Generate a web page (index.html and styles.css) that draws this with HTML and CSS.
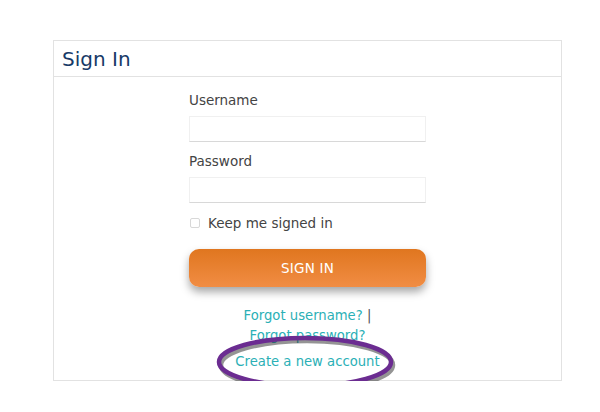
FILE: index.html
```html
<!DOCTYPE html>
<html>
<head>
<meta charset="utf-8">
<link rel="stylesheet" href="styles.css">
</head>
<body>
<div class="card">
  <div class="card-header">Sign In</div>
  <div class="card-body">
    <form class="form">
      <label class="label">Username</label>
      <div class="input"></div>
      <label class="label">Password</label>
      <div class="input"></div>
      <div class="check-row"><span class="checkbox"></span><span>Keep me signed in</span></div>
      <div class="button">SIGN IN</div>
      <div class="links">
        <div><a>Forgot username?</a> <span class="sep">|</span></div>
        <div><a>Forgot password?</a></div>
        <div class="create"><a>Create a new account</a>
          <svg class="ring" viewBox="0 0 186 60">
            <ellipse cx="91" cy="31" rx="86" ry="24" fill="none" stroke="#2a2a2a" stroke-opacity="0.5" stroke-width="4.5"/>
            <ellipse cx="89" cy="28" rx="86" ry="24" fill="none" stroke="#6b2c91" stroke-width="4.5"/>
          </svg>
        </div>
      </div>
    </form>
  </div>
</div>
</body>
</html>
```
FILE: styles.css
```css
html, body { margin: 0; padding: 0; background: #fff; }
body {
  font-family: "DejaVu Sans", "Noto Sans", sans-serif;
  padding-top: 40px;
}
.card {
  margin-left: 53px;
  width: 507px;
  border: 1px solid #e2e2e2;
  height: 339px;
  box-sizing: content-box;
}
.card-header {
  height: 35px;
  border-bottom: 1px solid #e2e2e2;
  color: #173a68;
  font-size: 20px;
  line-height: 36px;
  padding-left: 8px;
}
.card-body {
  padding-left: 135px;
  padding-top: 14px;
}
.form {
  width: 237px;
  display: flex;
  flex-direction: column;
}
.label {
  color: #444;
  font-size: 13.5px;
  line-height: 18px;
  height: 18px;
  margin-bottom: 7px;
}
.input {
  height: 24px;
  border: 1px solid #f0f0f0;
  border-bottom: 1px solid #d8d8d8;
  margin-bottom: 10px;
}
.check-row {
  display: flex;
  align-items: center;
  color: #444;
  font-size: 13.5px;
  height: 18px;
  margin-top: 1px;
  margin-bottom: 17px;
}
.checkbox {
  width: 8px;
  height: 8px;
  border: 1px solid #d8d8d8;
  border-radius: 2px;
  margin-left: 1px;
  margin-right: 8px;
}
.button {
  height: 38px;
  border-radius: 10px;
  background: linear-gradient(#e0761f, #f18d44);
  color: #fff;
  font-size: 13.5px;
  line-height: 38px;
  text-align: center;
  box-shadow: 0 5px 8px rgba(0,0,0,0.35);
  letter-spacing: 0.2px;
}
.links {
  margin-top: 19px;
  text-align: center;
  color: #2bb0b6;
  font-size: 13.2px;
  line-height: 20px;
}
.links a { color: #2bb0b6; }
.sep { color: #555; }
.create {
  position: relative;
  margin-top: 6px;
}
.ring {
  position: absolute;
  display: block;
  width: 186px;
  height: 60px;
  left: 27px;
  top: -18px;
}
```
